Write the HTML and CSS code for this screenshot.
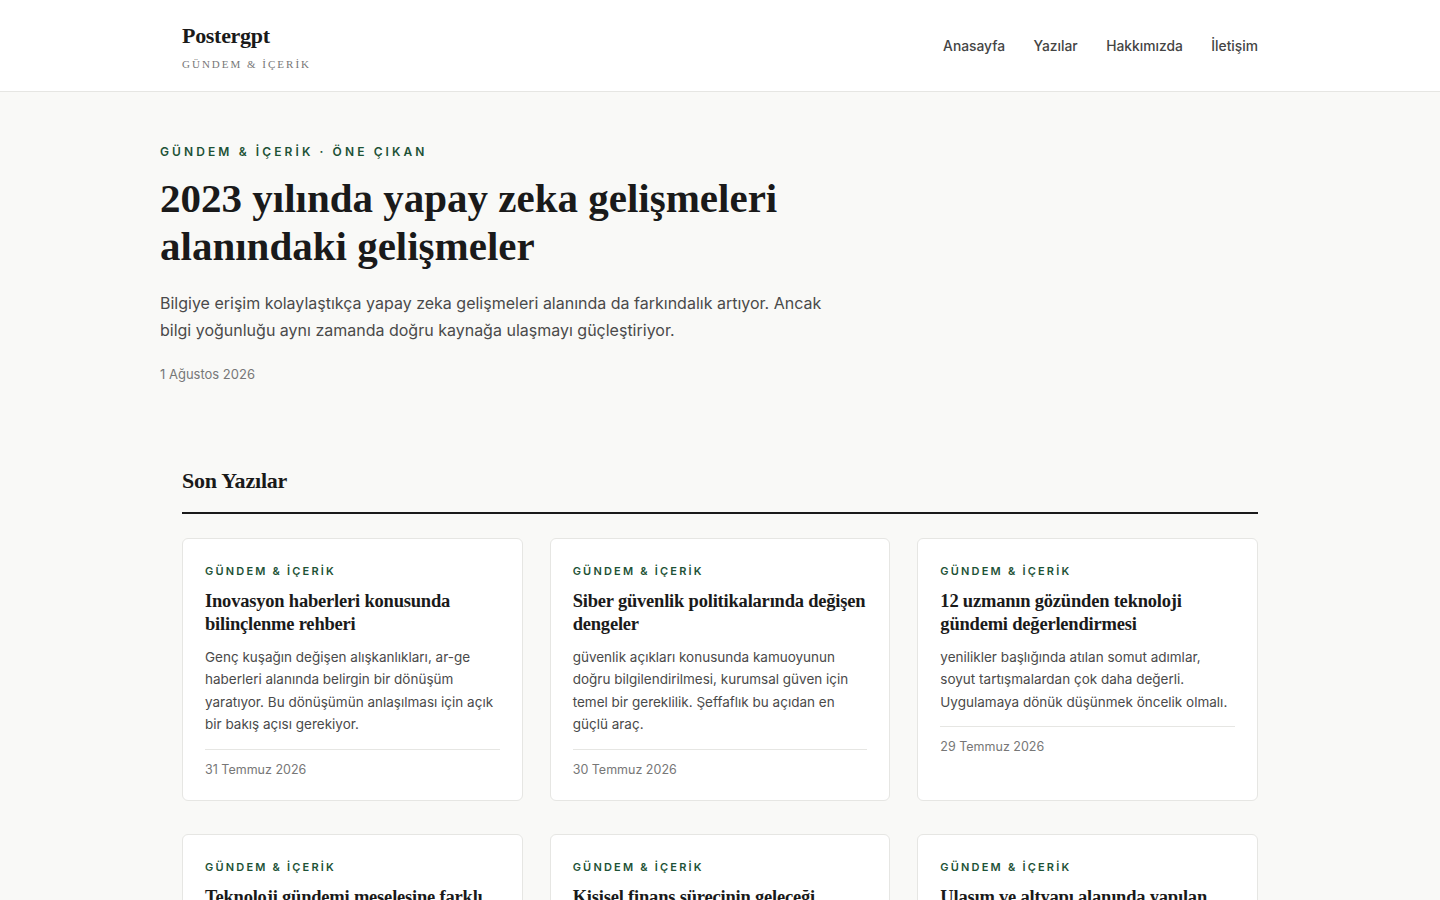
FILE: index.html
```html
<!DOCTYPE html>
<html lang="tr">
<head>
<meta charset="utf-8">
<title>Postergpt</title>
<link rel="stylesheet" href="styles.css">
</head>
<body>
<header class="site-header">
  <div class="header-inner">
    <div class="brand">
      <div class="brand-name">Postergpt</div>
      <div class="brand-tag">GÜNDEM &amp; İÇERİK</div>
    </div>
    <nav class="nav">
      <a href="#">Anasayfa</a>
      <a href="#">Yazılar</a>
      <a href="#">Hakkımızda</a>
      <a href="#">İletişim</a>
    </nav>
  </div>
</header>

<main>
  <section class="hero">
    <div class="hero-label">GÜNDEM &amp; İÇERİK · ÖNE ÇIKAN</div>
    <h1 class="hero-title">2023 yılında yapay zeka gelişmeleri alanındaki gelişmeler</h1>
    <p class="hero-text">Bilgiye erişim kolaylaştıkça yapay zeka gelişmeleri alanında da farkındalık artıyor. Ancak bilgi yoğunluğu aynı zamanda doğru kaynağa ulaşmayı güçleştiriyor.</p>
    <div class="hero-date">1 Ağustos 2026</div>
  </section>

  <section class="latest">
    <h2 class="section-title">Son Yazılar</h2>
    <div class="grid">
      <article class="card">
        <div class="card-cat">GÜNDEM &amp; İÇERİK</div>
        <h3 class="card-title">Inovasyon haberleri konusunda bilinçlenme rehberi</h3>
        <p class="card-text">Genç kuşağın değişen alışkanlıkları, ar-ge haberleri alanında belirgin bir dönüşüm yaratıyor. Bu dönüşümün anlaşılması için açık bir bakış açısı gerekiyor.</p>
        <div class="card-date">31 Temmuz 2026</div>
      </article>
      <article class="card">
        <div class="card-cat">GÜNDEM &amp; İÇERİK</div>
        <h3 class="card-title">Siber güvenlik politikalarında değişen dengeler</h3>
        <p class="card-text">güvenlik açıkları konusunda kamuoyunun doğru bilgilendirilmesi, kurumsal güven için temel bir gereklilik. Şeffaflık bu açıdan en güçlü araç.</p>
        <div class="card-date">30 Temmuz 2026</div>
      </article>
      <article class="card">
        <div class="card-cat">GÜNDEM &amp; İÇERİK</div>
        <h3 class="card-title">12 uzmanın gözünden teknoloji gündemi değerlendirmesi</h3>
        <p class="card-text">yenilikler başlığında atılan somut adımlar, soyut tartışmalardan çok daha değerli. Uygulamaya dönük düşünmek öncelik olmalı.</p>
        <div class="card-date">29 Temmuz 2026</div>
      </article>
      <article class="card">
        <div class="card-cat">GÜNDEM &amp; İÇERİK</div>
        <h3 class="card-title">Teknoloji gündemi meselesine farklı bir bakış</h3>
        <p class="card-text">Teknoloji gündemi konusunda yapılan tartışmalar, farklı bakış açılarının bir arada değerlendirilmesini gerektiriyor.</p>
        <div class="card-date">28 Temmuz 2026</div>
      </article>
      <article class="card">
        <div class="card-cat">GÜNDEM &amp; İÇERİK</div>
        <h3 class="card-title">Kişisel finans sürecinin geleceği</h3>
        <p class="card-text">Kişisel finans alanında yaşanan gelişmeler, bireylerin bütçe yönetimine bakışını yeniden şekillendiriyor.</p>
        <div class="card-date">27 Temmuz 2026</div>
      </article>
      <article class="card">
        <div class="card-cat">GÜNDEM &amp; İÇERİK</div>
        <h3 class="card-title">Ulaşım ve altyapı alanında yapılan yatırımlar</h3>
        <p class="card-text">Ulaşım ve altyapı yatırımları, şehirlerin gelecekteki yaşanabilirliği açısından belirleyici bir rol oynuyor.</p>
        <div class="card-date">26 Temmuz 2026</div>
      </article>
    </div>
  </section>
</main>
</body>
</html>
```

FILE: styles.css
```css
* {
  box-sizing: border-box;
}

html, body {
  margin: 0;
  padding: 0;
}

body {
  background: #f9f9f7;
  color: #1a1a1a;
  font-family: Inter, "Noto Sans", sans-serif;
}

.site-header {
  background: #ffffff;
  border-bottom: 1px solid #e6e6e3;
  height: 92px;
}

.header-inner {
  width: 1076px;
  margin: 0 auto;
  height: 100%;
  display: flex;
  align-items: center;
  justify-content: space-between;
}

.brand {
  display: flex;
  flex-direction: column;
  padding-top: 2px;
}

.brand-name {
  font-family: "Liberation Serif", "Times New Roman", serif;
  font-weight: 700;
  font-size: 22px;
  line-height: 26px;
  letter-spacing: -0.3px;
  color: #1a1a1a;
}

.brand-tag {
  font-family: "Liberation Serif", "Times New Roman", serif;
  font-size: 11px;
  letter-spacing: 2px;
  color: #777;
  margin-top: 8px;
  line-height: 14px;
}

.nav {
  display: flex;
  gap: 28.5px;
  padding-top: 1px;
}

.nav a {
  font-size: 13.8px;
  color: #444;
  text-decoration: none;
  font-weight: 500;
}

.hero {
  width: 1120px;
  margin: 0 auto;
  padding: 52px 0 0;
}

.hero-label {
  font-size: 12px;
  font-weight: 600;
  letter-spacing: 3.1px;
  color: #1d5236;
  line-height: 16px;
}

.hero-title {
  font-family: "Liberation Serif", "Times New Roman", serif;
  font-weight: 700;
  font-size: 41px;
  line-height: 48px;
  letter-spacing: 0;
  margin: 14px 0 0;
  max-width: 700px;
  color: #1a1a1a;
}

.hero-text {
  font-size: 16px;
  line-height: 27px;
  color: #4a4a4a;
  max-width: 680px;
  margin: 20px 0 0;
}

.hero-date {
  font-size: 13px;
  color: #777;
  margin-top: 21px;
  line-height: 18px;
}

.latest {
  width: 1076px;
  margin: 0 auto;
  padding-top: 84px;
}

.section-title {
  font-family: "Liberation Serif", "Times New Roman", serif;
  font-weight: 700;
  font-size: 22px;
  line-height: 28px;
  margin: 0;
  padding-bottom: 17px;
  border-bottom: 2px solid #1a1a1a;
  letter-spacing: -0.2px;
}

.grid {
  display: grid;
  grid-template-columns: repeat(3, 1fr);
  gap: 33px 27px;
  margin-top: 24px;
}

.card {
  background: #ffffff;
  border: 1px solid #e6e6e3;
  border-radius: 6px;
  padding: 24px 22px 21px;
  display: flex;
  flex-direction: column;
}

.card-cat {
  font-size: 11px;
  font-weight: 600;
  letter-spacing: 2.2px;
  color: #1d5236;
  line-height: 16px;
}

.card-title {
  font-family: "Liberation Serif", "Times New Roman", serif;
  font-weight: 700;
  font-size: 18.5px;
  line-height: 23px;
  margin: 11px 0 0;
  color: #1a1a1a;
  letter-spacing: -0.2px;
}

.card-text {
  font-size: 13.5px;
  line-height: 22.4px;
  color: #4a4a4a;
  margin: 10px 0 0;
}

.card-date {
  font-size: 12.5px;
  color: #777;
  border-top: 1px solid #e6e6e3;
  margin-top: 13px;
  padding-top: 11px;
  line-height: 18px;
}
```
